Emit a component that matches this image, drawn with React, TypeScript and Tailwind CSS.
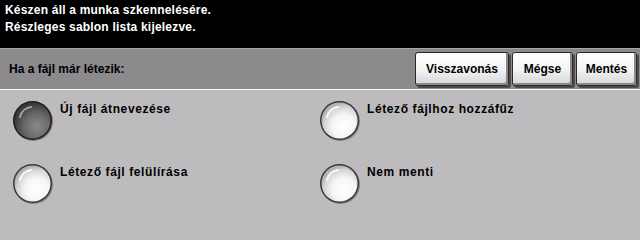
import React from "react";

function Radio({ selected, id }: { selected: boolean; id: string }) {
  return (
    <svg width="42" height="42" viewBox="0 0 42 42" className="shrink-0">
      <defs>
        <radialGradient id={`face-${id}`} cx="62%" cy="66%" r="64%">
          {selected ? (
            <>
              <stop offset="0%" stopColor="#8a888a" />
              <stop offset="55%" stopColor="#6a686a" />
              <stop offset="100%" stopColor="#3a383a" />
            </>
          ) : (
            <>
              <stop offset="0%" stopColor="#ffffff" />
              <stop offset="50%" stopColor="#f6f6f6" />
              <stop offset="85%" stopColor="#d6d4d6" />
              <stop offset="100%" stopColor="#b4b2b4" />
            </>
          )}
        </radialGradient>
      </defs>
      <circle cx="21.5" cy="21.5" r="19.5" fill="#5a585a" opacity="0.6" />
      <circle cx="20.5" cy="20.5" r="19.5" fill={selected ? "#1e1c1e" : "#3a383a"} />
      <circle cx="20.5" cy="20.5" r="18" fill={`url(#face-${id})`} />
      <path
        d="M8 17 A13 13 0 0 1 19 7"
        fill="none"
        stroke={selected ? "#b0aeb0" : "#ffffff"}
        strokeWidth="2"
        strokeLinecap="round"
        opacity="0.9"
      />
    </svg>
  );
}

function Btn({ label, w }: { label: string; w: string }) {
  return (
    <button
      className={`${w} h-[34px] rounded-[3px] border border-[#2a2a2a] bg-gradient-to-b from-white via-[#f4f4f4] to-[#d6d6d6] shadow-[inset_-2px_-2px_0_#8a8a8a,2px_2px_0_#4a4a4a] text-[12px] font-bold text-black flex items-center justify-center`}
    >
      {label}
    </button>
  );
}

function Option({ label, selected, id }: { label: string; selected?: boolean; id: string }) {
  return (
    <div className="flex items-start gap-[6px]">
      <Radio selected={!!selected} id={id} />
      <span className="text-[12px] font-bold text-black leading-[15px] pt-[2px] tracking-[0.6px]">
        {label}
      </span>
    </div>
  );
}

export default function App() {
  return (
    <div
      className="w-[640px] h-[240px] flex flex-col bg-[#bdbbbd] overflow-hidden"
      style={{ fontFamily: '"Liberation Sans", Arial, sans-serif' }}
    >
      <div className="h-[48px] bg-black px-[5px] pt-[2px] text-white text-[12px] font-bold leading-[17px] tracking-[0.2px]">
        <div>Készen áll a munka szkennelésére.</div>
        <div>Részleges sablon lista kijelezve.</div>
      </div>
      <div className="h-px bg-[#a8a6a8]" />
      <div className="h-[40px] bg-[#8c8a8c] flex items-center justify-between pl-[9px] pr-[3px] pb-[1px]">
        <span className="text-[12px] font-bold text-black">Ha a fájl már létezik:</span>
        <div className="flex gap-[3px]">
          <Btn label="Visszavonás" w="w-[94px]" />
          <Btn label="Mégse" w="w-[61px]" />
          <Btn label="Mentés" w="w-[61px]" />
        </div>
      </div>
      <div className="h-px bg-[#f4f4f4]" />
      <div className="grid grid-cols-[307px_1fr] gap-y-[21px] pl-[12px] pt-[10px]">
        <Option id="a" label="Új fájl átnevezése" selected />
        <Option id="b" label="Létező fájlhoz hozzáfűz" />
        <Option id="c" label="Létező fájl felülírása" />
        <Option id="d" label="Nem menti" />
      </div>
    </div>
  );
}
